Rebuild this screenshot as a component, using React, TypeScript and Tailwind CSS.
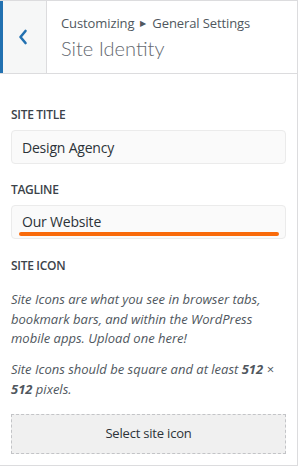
export default function App() {
  return (
    <div className="w-[299px] h-[466px] bg-white overflow-hidden" style={{ fontFamily: '"Open Sans", "Noto Sans", sans-serif' }}>
      <div className="w-[298px] h-[466px] border-t border-r border-b border-[#dcdcde] flex flex-col">
        {/* header */}
        <div className="h-[73px] flex border-b border-[#dcdcde] shrink-0">
          <div className="w-[47px] h-full bg-[#f6f7f7] border-l-[3px] border-[#2271b1] border-r border-r-[#dcdcde] flex items-center justify-center pr-[4px]">
            <svg width="10" height="16" viewBox="0 0 10 16" fill="none">
              <path d="M7.5 2 L2.5 8 L7.5 14" stroke="#2271b1" strokeWidth="2.6" strokeLinecap="round" strokeLinejoin="round" />
            </svg>
          </div>
          <div className="pl-[14px] pt-[12px] flex flex-col">
            <div className="text-[13px] leading-[20px] text-[#50575e] tracking-[-0.1px] flex items-center">
              Customizing
              <span className="text-[8px] mx-[6px] text-[#50575e]">▶</span>
              General Settings
            </div>
            <div className="text-[20px] leading-[28px] text-[#646970] font-light mt-[1px]" style={{ fontFamily: 'Lato, "Open Sans", sans-serif' }}>Site Identity</div>
          </div>
        </div>

        {/* body */}
        <div className="px-[11px] flex flex-col">
          <div className="mt-[31px] text-[12px] leading-[20px] font-semibold text-[#3c434a] tracking-[-0.3px]">SITE TITLE</div>
          <div className="mt-[5px] h-[34px] bg-[#fafafa] border border-[#ebebeb] rounded-[4px] flex items-center pl-[10px] text-[14px] text-[#2c3338] tracking-[-0.2px]">
            Design Agency
          </div>

          <div className="mt-[16px] text-[12px] leading-[20px] font-semibold text-[#3c434a] tracking-[-0.3px]">TAGLINE</div>
          <div className="relative mt-[5px] h-[34px] bg-[#fafafa] border border-[#ebebeb] rounded-[4px] flex items-center pl-[10px] pb-[2px] text-[14px] text-[#2c3338] tracking-[-0.2px]">
            Our Website
            <div className="absolute left-[7px] right-[6px] bottom-[2px] h-[4px] rounded-full bg-[#f96a0a]" />
          </div>

          <div className="mt-[17px] text-[12px] leading-[20px] font-semibold text-[#3c434a] tracking-[-0.3px]">SITE ICON</div>
          <p className="mt-[14px] text-[13px] leading-[19.5px] italic text-[#50575e] tracking-[0px]">
            Site Icons are what you see in browser tabs, bookmark bars, and within the WordPress mobile apps. Upload one here!
          </p>
          <p className="mt-[10px] text-[13px] leading-[20px] italic text-[#50575e] tracking-[0px]">
            Site Icons should be square and at least <strong className="font-bold">512</strong> × <strong className="font-bold">512</strong> pixels.
          </p>

          <button className="mt-[15px] h-[40px] w-full bg-[#f0f0f0] border border-dashed border-[#c3c4c7] text-[13px] text-[#2c3338] tracking-[-0.2px]">
            Select site icon
          </button>
        </div>
      </div>
    </div>
  )
}
